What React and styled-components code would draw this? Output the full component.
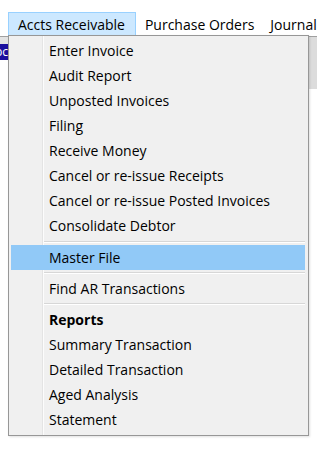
import React from "react";
import styled, { createGlobalStyle } from "styled-components";

const Global = createGlobalStyle`
  html, body { margin: 0; padding: 0; background: #ffffff; }
  body { font-family: "Open Sans", "Noto Sans", Arial, sans-serif; font-size: 14px; color: #000; }
`;

const Page = styled.div`
  position: relative;
  width: 317px;
  height: 462px;
  overflow: hidden;
  background: #ffffff;
`;

const MenuBar = styled.div`
  display: flex;
  align-items: stretch;
  height: 24px;
  padding: 12px 0 0 8px;
`;

const BarItem = styled.div`
  display: flex;
  align-items: center;
  padding: 0 ${(p) => (p.$active ? 10 : 13)}px 0 ${(p) => (p.$active ? 9 : 1)}px;
  border: 1px solid ${(p) => (p.$active ? "#99d1ff" : "transparent")};
  background: ${(p) => (p.$active ? "#cce8ff" : "transparent")};
  white-space: nowrap;
  margin-right: ${(p) => (p.$active ? 7 : 0)}px;
`;

const Desk = styled.div`
  display: flex;
  justify-content: space-between;
  height: 60px;
`;

const LeftPane = styled.div`
  width: 8px;
  border-top: 1px solid #a0a0a0;
  display: flex;
  flex-direction: column;
`;

const PaneStrip = styled.div`
  height: 7px;
  background: #e3e3e3;
`;

const TitleBar = styled.div`
  height: 16px;
  background: #1a0f9e;
  color: #fff;
  font-size: 12px;
  line-height: 16px;
  overflow: hidden;
  direction: rtl;
  white-space: nowrap;
`;

const RightPane = styled.div`
  width: 9px;
  border-top: 1px solid #a0a0a0;
  background: #dcdcdc;
  height: 52px;
`;

const Dropdown = styled.div`
  position: absolute;
  left: 8px;
  top: 35px;
  width: 299px;
  height: 397px;
  padding: 2px 0 0 0;
  background: #f0f0f0;
  border: 1px solid #979797;
  box-shadow: 1px 1px 2px rgba(0, 0, 0, 0.12);
  display: flex;
  flex-direction: column;
`;

const Gutter = styled.div`
  position: absolute;
  left: 33px;
  top: 0;
  bottom: 0;
  width: 1px;
  background: #e4e4e4;
  border-right: 1px solid #fcfcfc;
`;

const Item = styled.div`
  position: relative;
  height: 25px;
  margin: 0 3px 0 2px;
  padding-left: 38px;
  display: flex;
  align-items: center;
  font-weight: ${(p) => (p.$bold ? 700 : 400)};
  background: ${(p) => (p.$hover ? "#91c9f7" : "transparent")};
  white-space: nowrap;
`;

const Sep = styled.div`
  height: ${(p) => p.$h}px;
  display: flex;
  flex-direction: column;
  justify-content: center;
  padding-left: 35px;
  margin-right: 3px;
  &::before {
    content: "";
    display: block;
    height: 1px;
    background: #d7d7d7;
  }
  &::after {
    content: "";
    display: block;
    height: 1px;
    background: #ffffff;
  }
`;

const groupA = [
  "Enter Invoice",
  "Audit Report",
  "Unposted Invoices",
  "Filing",
  "Receive Money",
  "Cancel or re-issue Receipts",
  "Cancel or re-issue Posted Invoices",
  "Consolidate Debtor",
];
const groupB = ["Summary Transaction", "Detailed Transaction", "Aged Analysis", "Statement"];

export default function App() {
  return (
    <>
      <Global />
      <Page>
        <MenuBar>
          <BarItem $active>Accts Receivable</BarItem>
          <BarItem>Purchase Orders</BarItem>
          <BarItem>Journal</BarItem>
        </MenuBar>
        <Desk>
          <LeftPane>
            <PaneStrip />
            <TitleBar>pc</TitleBar>
          </LeftPane>
          <RightPane />
        </Desk>
        <Dropdown>
          <Gutter />
          {groupA.map((t) => (
            <Item key={t}>{t}</Item>
          ))}
          <Sep $h={7} />
          <Item $hover>Master File</Item>
          <Sep $h={6} />
          <Item>Find AR Transactions</Item>
          <Sep $h={6} />
          <Item $bold>Reports</Item>
          {groupB.map((t) => (
            <Item key={t}>{t}</Item>
          ))}
        </Dropdown>
      </Page>
    </>
  );
}
